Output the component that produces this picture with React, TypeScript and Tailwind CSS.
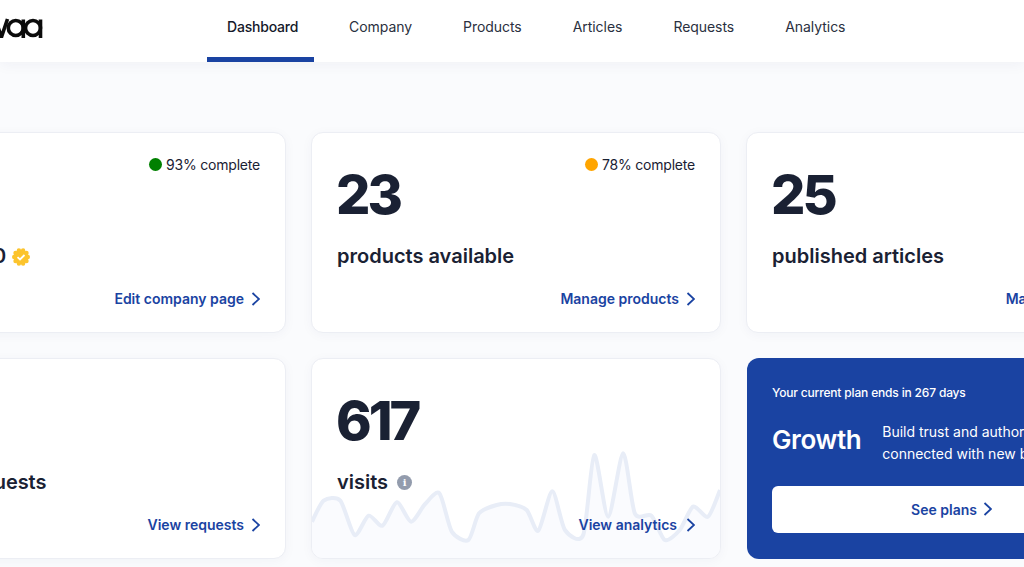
import React from "react";

const navItems = ["Dashboard", "Company", "Products", "Articles", "Requests", "Analytics"];

const Chevron = () => (
  <svg width="10" height="14" viewBox="0 0 10 14" fill="none" stroke="currentColor" strokeWidth="1.8">
    <path d="M2.500 1 9 7l-6.500 6" />
  </svg>
);

const CardLink = ({ label, wide }: { label: string; wide?: boolean }) => (
  <a
    className={`mt-[19px] flex items-center justify-end text-[14px] leading-[20px] font-semibold text-[#1a43a2] ${
      wide ? "gap-[8px]" : "gap-[6px]"
    }`}
  >
    {label}
    <Chevron />
  </a>
);

const Status = ({ color, label }: { color: string; label: string }) => (
  <div className="h-[16px] flex items-center justify-end gap-1 text-[14px] tracking-[-0.2px] text-[#1a2133]">
    <span className={`w-[13px] h-[13px] rounded-full ${color}`}></span>
    {label}
  </div>
);

const chartPoints = [
  [20, 515], [55, 452], [105, 452], [148, 555], [190, 497], [232, 527], [275, 457], [318, 515],
  [360, 462], [403, 430], [440, 545], [490, 570], [522, 490], [575, 465], [615, 462], [665, 480],
  [700, 542], [742, 424], [780, 540], [835, 555], [868, 315], [910, 500], [955, 310], [990, 490],
  [1040, 497], [1080, 570], [1125, 540], [1165, 470], [1210, 500], [1246, 420],
];

// catmull-rom through the points, so the line stays soft like the sparkline
const smoothPath = (pts: number[][]) => {
  let d = `M${pts[0][0]} ${pts[0][1]}`;
  for (let i = 0; i < pts.length - 1; i++) {
    const p0 = pts[i - 1] || pts[i];
    const p1 = pts[i];
    const p2 = pts[i + 1];
    const p3 = pts[i + 2] || p2;
    const c1x = p1[0] + (p2[0] - p0[0]) / 8;
    const c1y = p1[1] + (p2[1] - p0[1]) / 8;
    const c2x = p2[0] - (p3[0] - p1[0]) / 8;
    const c2y = p2[1] - (p3[1] - p1[1]) / 8;
    d += ` C${c1x} ${c1y} ${c2x} ${c2y} ${p2[0]} ${p2[1]}`;
  }
  return d;
};

const Sparkline = () => {
  const line = smoothPath(chartPoints);
  return (
    <svg className="absolute left-0 bottom-0 w-full h-[108px]" viewBox="20 300 1226 324" preserveAspectRatio="none" fill="none">
      <path d={`${line} L1246 624 L20 624 Z`} fill="#fafbfe" />
      <path d={line} stroke="#e8edf7" strokeWidth="12" />
    </svg>
  );
};

const VerifiedBadge = () => (
  <svg className="ml-[6px] translate-y-px" width="18" height="18" viewBox="0 0 18 18">
    <circle cx="9" cy="9" r="7.200" fill="#fcc42d" />
    {[0, 36, 72, 108, 144, 180, 216, 252, 288, 324].map((deg) => (
      <circle
        key={deg}
        cx={9 + 6.8 * Math.cos((deg * Math.PI) / 180)}
        cy={9 + 6.8 * Math.sin((deg * Math.PI) / 180)}
        r="2.200"
        fill="#fcc42d"
      />
    ))}
    <path d="M5.500 9.200 8 11.500l4.500-4.500" fill="none" stroke="#fff" strokeWidth="1.800" />
  </svg>
);

const Card = ({ children }: { children: React.ReactNode }) => (
  <div className="relative w-[410px] h-[201px] shrink-0 overflow-hidden rounded-[12px] bg-white border border-[#eceef4] shadow-[0_2px_12px_rgba(30,40,90,0.04)] px-[25px] pt-[23px]">
    {children}
  </div>
);

const Stat = ({ value }: { value?: string }) => (
  <div className="-ml-px text-[54px] leading-[46px] font-extrabold tracking-[-3px] text-[#1a2133] h-[46px]">{value}</div>
);

const Label = ({ children }: { children: React.ReactNode }) => (
  <div className="mt-[24px] flex items-center text-[20px] leading-[28px] font-semibold text-[#1a2133] whitespace-nowrap">{children}</div>
);

export default function App() {
  return (
    <div className="w-[1024px] h-[567px] overflow-hidden bg-[#fafbfd] font-['Inter',sans-serif]">
      <nav className="relative h-[62px] bg-white shadow-[0_2px_14px_rgba(30,40,90,0.05)] flex">
        <svg className="mt-[18px] shrink-0" width="44" height="20" viewBox="0 0 44 20" fill="none" stroke="#0b0b0b" strokeWidth="3.600">
          <path d="M-5 1 1.500 19 7.500 1" />
          <circle cx="15.800" cy="10" r="7.500" />
          <path d="M23.300 1.500V20" />
          <circle cx="33" cy="10" r="7.500" />
          <path d="M40.500 1.500V20" />
        </svg>
        <div className="ml-[163px] flex">
          {navItems.map((item, index) => (
            <a
              key={item}
              className={`h-[62px] pt-[18px] text-[14px] leading-[18px] ${
                index === 0
                  ? "w-[107px] mr-[15px] px-5 text-center border-b-[5px] border-[#1a43a2] text-[#14192a] font-medium tracking-[-0.2px] whitespace-nowrap"
                  : "px-5 mr-[11px] text-[#2a3040] tracking-[-0.05px]"
              }`}
            >
              {item}
            </a>
          ))}
        </div>
      </nav>

      <main className="ml-[-124px] pt-[70px] flex flex-col gap-[25px]">
        <div className="flex gap-[25px]">
          <Card>
            <Status color="bg-[#008000]" label="93% complete" />
            <Stat />
            <Label>
              <span className="tracking-[0.2px]">Score: 100</span>
              <VerifiedBadge />
            </Label>
            <CardLink label="Edit company page" />
          </Card>
          <Card>
            <Status color="bg-[#ffa500]" label="78% complete" />
            <Stat value="23" />
            <Label>products available</Label>
            <CardLink label="Manage products" />
          </Card>
          <Card>
            <div className="h-[16px]"></div>
            <Stat value="25" />
            <Label>published articles</Label>
            <CardLink label="Manage articles" />
          </Card>
        </div>

        <div className="flex gap-[25px]">
          <Card>
            <div className="h-[16px]"></div>
            <Stat />
            <Label>
              <span className="tracking-[-0.1px]">buyer requests</span>
            </Label>
            <CardLink label="View requests" />
          </Card>
          <Card>
            <Sparkline />
            <div className="relative">
              <div className="h-[16px]"></div>
              <Stat value="617" />
              <Label>
                visits
                <span className="ml-[9px] w-[15px] h-[15px] rounded-full bg-[#939cad] text-white text-[10px] leading-[15px] font-bold text-center font-['DejaVu_Serif',serif]">i</span>
              </Label>
              <CardLink label="View analytics" wide />
            </div>
          </Card>
          <div className="w-[409px] ml-px h-[201px] shrink-0 rounded-[12px] bg-[#1a43a2] px-[25px] pt-[27px] text-white">
            <div className="text-[12px] leading-[16px] font-medium tracking-[-0.17px]">Your current plan ends in 267 days</div>
            <div className="mt-[20px] flex items-start gap-[21px]">
              <div className="text-[26px] leading-[38px] font-semibold tracking-[-0.4px]">Growth</div>
              <div className="text-[14px] leading-[22px]">
                Build trust and authority and get
                <br />
                connected with new buyers
              </div>
            </div>
            <a className="mt-[21px] h-[47px] pb-px rounded-[6px] bg-white flex items-center justify-center gap-[5px] text-[14px] font-semibold text-[#1a43a2]">
              See plans
              <Chevron />
            </a>
          </div>
        </div>
      </main>
    </div>
  );
}
